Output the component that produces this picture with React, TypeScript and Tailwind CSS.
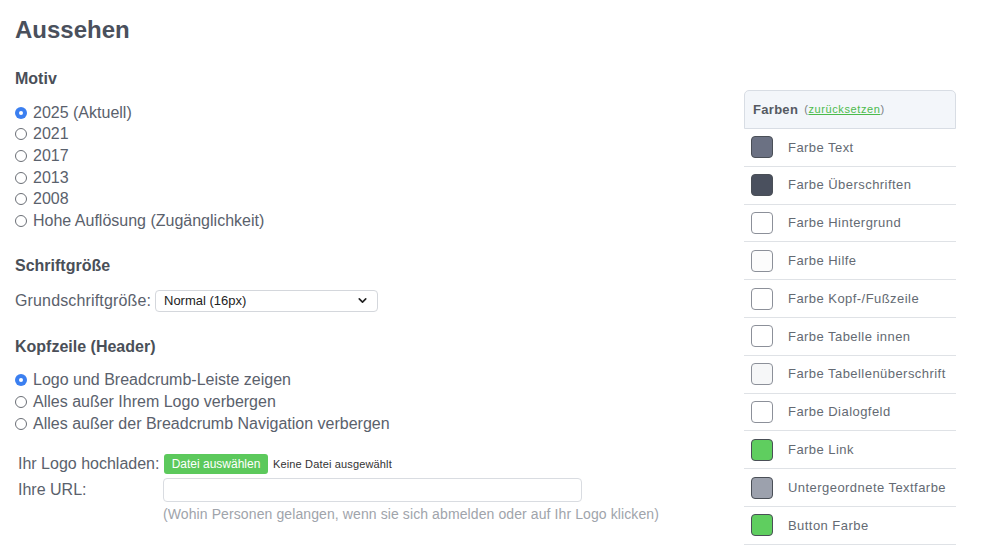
import React from 'react';
import { ChevronDown } from 'lucide-react';

const motive = ['2025 (Aktuell)', '2021', '2017', '2013', '2008', 'Hohe Auflösung (Zugänglichkeit)'];
const header = [
    'Logo und Breadcrumb-Leiste zeigen',
    'Alles außer Ihrem Logo verbergen',
    'Alles außer der Breadcrumb Navigation verbergen',
];

const colors = [
    { name: 'Farbe Text', color: '#6b7183', dark: true },
    { name: 'Farbe Überschriften', color: '#4a505e', dark: true },
    { name: 'Farbe Hintergrund', color: '#ffffff' },
    { name: 'Farbe Hilfe', color: '#fcfcfc' },
    { name: 'Farbe Kopf-/Fußzeile', color: '#ffffff' },
    { name: 'Farbe Tabelle innen', color: '#ffffff' },
    { name: 'Farbe Tabellenüberschrift', color: '#f6f7f8' },
    { name: 'Farbe Dialogfeld', color: '#ffffff' },
    { name: 'Farbe Link', color: '#5fce5f', dark: true },
    { name: 'Untergeordnete Textfarbe', color: '#9ca1ad', dark: true },
    { name: 'Button Farbe', color: '#5fce5f', dark: true },
];

const Radio = ({ checked }: { checked?: boolean }) =>
    checked ? (
        <span className="w-[12px] h-[12px] rounded-full bg-[#3b7ff0] flex items-center justify-center shrink-0">
            <span className="w-[4px] h-[4px] rounded-full bg-white"></span>
        </span>
    ) : (
        <span className="w-[12px] h-[12px] rounded-full border border-[#6b6f76] bg-white shrink-0"></span>
    );

const RadioList = ({ items }: { items: string[] }) => (
    <div className="mt-[11px] flex flex-col">
        {items.map((item, i) => (
            <div key={item} className="flex items-center gap-[6px] h-[21.6px] text-[16px] text-[#5a616c]">
                <Radio checked={i === 0} />
                <span>{item}</span>
            </div>
        ))}
    </div>
);

export default function App() {
    return (
        <div className="w-[984px] h-[556px] bg-white flex overflow-hidden font-['Liberation_Sans',Arial,sans-serif]">
            <div className="flex-1 pl-[15px] pt-[1px]">
                <h1 className="mt-[13px] text-[24px] leading-[32px] font-bold text-[#4a505c]">Aussehen</h1>

                <h2 className="mt-[21px] text-[16px] leading-[24px] font-bold text-[#4a4f58]">Motiv</h2>
                <RadioList items={motive} />

                <h2 className="mt-[22px] text-[16px] leading-[24px] font-bold text-[#4a4f58]">Schriftgröße</h2>
                <div className="mt-[11px] flex items-center h-[24px] text-[16px] text-[#5a616c]">
                    <span className="w-[140px] tracking-[0.15px]">Grundschriftgröße:</span>
                    <div className="w-[223px] h-[22px] border border-[#d4d7dc] rounded-[4px] flex items-center justify-between pl-[8px] pr-[8px] text-[13px] text-[#222]">
                        <span>Normal (16px)</span>
                        <ChevronDown className="w-[13px] h-[13px] text-[#222]" strokeWidth={3} />
                    </div>
                </div>

                <h2 className="mt-[22px] text-[16px] leading-[24px] font-bold text-[#4a4f58]">Kopfzeile (Header)</h2>
                <RadioList items={header} />

                <div className="mt-[20px] pl-[3px] flex items-center h-[20px] text-[16px] text-[#5a616c]">
                    <span className="w-[146px]">Ihr Logo hochladen:</span>
                    <span className="w-[104px] h-[20px] rounded-[3px] bg-[#5cc95c] text-white text-[12px] flex items-center justify-center">
                        Datei auswählen
                    </span>
                    <span className="ml-[5px] text-[11px] tracking-[0.15px] text-[#333]">Keine Datei ausgewählt</span>
                </div>
                <div className="mt-[4px] pl-[3px] flex items-center h-[24px] text-[16px] text-[#5a616c]">
                    <span className="w-[145px]">Ihre URL:</span>
                    <div className="w-[419px] h-[24px] border border-[#d9dce1] rounded-[4px] bg-white"></div>
                </div>
                <p className="mt-[3px] ml-[148px] text-[14px] leading-[18px] tracking-[0.1px] text-[#a0a4ab]">
                    (Wohin Personen gelangen, wenn sie sich abmelden oder auf Ihr Logo klicken)
                </p>
            </div>

            <div className="w-[212px] mr-[28px] mt-[90px]">
                <div className="h-[39px] bg-[#f3f6fa] border border-[#d8dde4] rounded-t-[5px] flex items-center pl-[8px] gap-[6px]">
                    <span className="text-[13px] font-bold tracking-[0.3px] text-[#555a62]">Farben</span>
                    <span className="text-[11px] tracking-[0.6px] text-[#7a7f86]">
                        (<span className="text-[#4cbb4c] underline">zurücksetzen</span>)
                    </span>
                </div>
                {colors.map((c) => (
                    <div key={c.name} className="h-[37.8px] border-b border-[#dfe2e6] flex items-center pl-[7px]">
                        <span
                            className={c.dark ? 'w-[22px] h-[22px] rounded-[4px] border border-[#4a4f57]' : 'w-[22px] h-[22px] rounded-[4px] border border-[#8c9099]'}
                            style={{ backgroundColor: c.color }}
                        ></span>
                        <span className="ml-[15px] text-[13px] tracking-[0.45px] text-[#646a73]">{c.name}</span>
                    </div>
                ))}
            </div>
        </div>
    );
}
